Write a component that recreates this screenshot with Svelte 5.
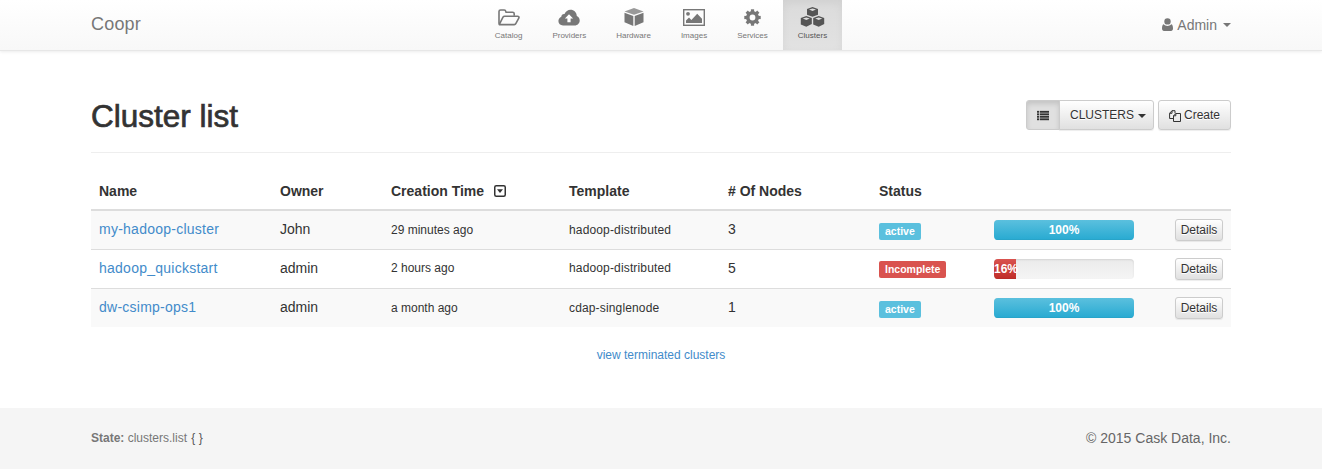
<script>
  const rows = [
    { name: 'my-hadoop-cluster', owner: 'John', time: '29 minutes ago', template: 'hadoop-distributed', nodes: 3, status: 'active', pct: 100 },
    { name: 'hadoop_quickstart', owner: 'admin', time: '2 hours ago', template: 'hadoop-distributed', nodes: 5, status: 'Incomplete', pct: 16 },
    { name: 'dw-csimp-ops1', owner: 'admin', time: 'a month ago', template: 'cdap-singlenode', nodes: 1, status: 'active', pct: 100 }
  ];
  const navItems = ['Catalog', 'Providers', 'Hardware', 'Images', 'Services', 'Clusters'];
  const teeth = [0, 45, 90, 135, 180, 225, 270, 315];
</script>

<header class="navbar">
  <div class="container bar">
    <a class="brand" href="#top">Coopr</a>
    <nav class="nav">
      {#each navItems as item}
        <a class="nav-item" class:active={item === 'Clusters'} href="#top">
          <span class="nav-icon">
            {#if item === 'Catalog'}
              <svg width="22" height="17" viewBox="0 0 22 17" fill="none" stroke="currentColor" stroke-width="1.6" stroke-linejoin="round">
                <path d="M1 14.5V2.6C1 1.7 1.7 1 2.6 1h3.6c.9 0 1.5.6 1.6 1.5l.1.7h6.7c.9 0 1.6.7 1.6 1.6v2" />
                <path d="M1.2 15.6 5 8.2c.3-.6.9-1 1.6-1h13c1 0 1.7 1 1.2 1.9l-3 5.6c-.3.6-.9.9-1.5.9H2.2c-.8 0-1.2-.4-1-1z" />
              </svg>
            {:else if item === 'Providers'}
              <svg width="22" height="17" viewBox="0 0 22 17">
                <path fill="currentColor" d="M5 16.5C2.3 16.5.4 14.600.4 12.100c0-2 1.200-3.600 2.900-4.300C3.300 5.900 4.900 4.700 6.500 5 7.600 2.400 9.900.8 12.500.8c3.500 0 6.200 2.700 6.300 6.300 1.800.7 2.900 2.400 2.900 4.400 0 2.800-2.200 5-5 5z" />
                <path fill="#fff" d="M11 5.200 6.900 9.600h2.500v3.600h3.200V9.600h2.500z" />
              </svg>
            {:else if item === 'Hardware'}
              <svg width="20" height="18" viewBox="0 0 20 18">
                <path fill="currentColor" d="M10 0 19.500 3.400 10 6.800.5 3.400z" opacity=".75" />
                <path fill="currentColor" d="M.5 4.700 9.300 7.900V18L.5 14.300zM19.500 4.700 10.700 7.900V18l8.800-3.700z" />
              </svg>
            {:else if item === 'Images'}
              <svg width="22" height="17" viewBox="0 0 22 17">
                <rect x=".7" y=".7" width="20.600" height="15.600" fill="none" stroke="currentColor" stroke-width="1.400" />
                <circle cx="5" cy="4.800" r="1.900" fill="currentColor" />
                <path fill="currentColor" d="M3 14v-2.400l3-3 2.400 2.400 5.800-6.200 4.800 5V14z" />
              </svg>
            {:else if item === 'Services'}
              <svg width="17" height="17" viewBox="0 0 17 17">
                <circle cx="8.500" cy="8.500" r="4.700" fill="none" stroke="currentColor" stroke-width="3.600" />
                {#each teeth as deg}
                  <rect x="6.900" y=".3" width="3.200" height="3.400" fill="currentColor" transform="rotate({deg} 8.500 8.500)" />
                {/each}
              </svg>
            {:else}
              <svg width="25" height="20" viewBox="0 0 25 20" fill="currentColor">
                <path d="M12.500 0 18 2v5.800L12.500 9.800 7 7.800V2zM12.500 1.400 9 2.600l3.500 1.300L16 2.600z" fill-rule="evenodd" />
                <path d="M6.300 9 11.800 11v6L6.300 19.800.8 17.500V11zM6.300 10.400 2.800 11.600l3.500 1.300 3.500-1.300z" fill-rule="evenodd" />
                <path d="M18.700 9 24.200 11v6L18.700 19.800 13.200 17.500V11zM18.700 10.400 15.200 11.600l3.500 1.300 3.500-1.300z" fill-rule="evenodd" />
              </svg>
            {/if}
          </span>
          <span class="nav-label">{item}</span>
        </a>
      {/each}
    </nav>
    <div class="user">
      <svg width="11" height="13" viewBox="0 0 11 13" fill="currentColor">
        <circle cx="5.500" cy="3.400" r="3.200" />
        <path d="M1.700 6.200C2.700 7.300 4 7.900 5.500 7.900s2.800-.6 3.800-1.700c1 .2 1.700 1.500 1.700 4.400 0 1.300-.8 2.400-2 2.400H2c-1.200 0-2-1.100-2-2.400 0-2.900.7-4.200 1.700-4.400z" />
      </svg>
      <span>Admin</span>
      <i class="caret"></i>
    </div>
  </div>
</header>

<main class="container">
  <div class="page-header">
    <h1>Cluster list</h1>
    <div class="actions">
      <div class="btn-group">
        <button class="btn btn-active" type="button" aria-label="List view">
          <svg width="13" height="11" viewBox="0 0 13 11" fill="#333">
            <rect y=".5" width="2.200" height="2" /><rect x="3" y=".5" width="10" height="2" />
            <rect y="3.200" width="2.200" height="2" /><rect x="3" y="3.200" width="10" height="2" />
            <rect y="5.900" width="2.200" height="2" /><rect x="3" y="5.900" width="10" height="2" />
            <rect y="8.600" width="2.200" height="2" /><rect x="3" y="8.600" width="10" height="2" />
          </svg>
        </button>
        <button class="btn btn-clusters" type="button">CLUSTERS <i class="caret dark"></i></button>
      </div>
      <button class="btn btn-create" type="button">
        <svg width="12" height="12" viewBox="0 0 12 12" fill="none" stroke="#333" stroke-width="1">
          <path d="M4 8.500H.6V3.300L3 .7h3v2.600" />
          <path d="M3 .7v2.600H.6" />
          <path d="M4.500 5.800 6.800 3.500h4.700v8H4.500z" />
          <path d="M6.800 3.500v2.300H4.500" />
        </svg>
        Create
      </button>
    </div>
  </div>

  <table>
    <colgroup>
      <col style="width:181px" /><col style="width:111px" /><col style="width:178px" /><col style="width:159px" />
      <col style="width:151px" /><col style="width:115px" /><col style="width:156px" /><col style="width:89px" />
    </colgroup>
    <thead>
      <tr>
        <th>Name</th>
        <th>Owner</th>
        <th>
          Creation Time
          <svg class="sort" width="12" height="12" viewBox="0 0 12 12">
            <rect x=".75" y=".75" width="10.500" height="10.500" rx="1.500" fill="none" stroke="#333" stroke-width="1.500" />
            <path d="M3 4.200h6L6 8z" fill="#333" />
          </svg>
        </th>
        <th>Template</th>
        <th># Of Nodes</th>
        <th>Status</th>
        <th></th>
        <th></th>
      </tr>
    </thead>
    <tbody>
      {#each rows as row}
        <tr>
          <td class="name"><a href="#top">{row.name}</a></td>
          <td>{row.owner}</td>
          <td class="small">{row.time}</td>
          <td class="small template">{row.template}</td>
          <td>{row.nodes}</td>
          <td class="flush"><span class="label" class:danger={row.status === 'Incomplete'}>{row.status}</span></td>
          <td class="flush">
            <div class="progress">
              <div class="progress-bar" class:danger={row.pct < 100} style="width:{row.pct}%">{row.pct}%</div>
            </div>
          </td>
          <td class="flush right"><button class="btn btn-details" type="button">Details</button></td>
        </tr>
      {/each}
    </tbody>
  </table>

  <p class="terminated"><a href="#top">view terminated clusters</a></p>
</main>

<footer class="footer">
  <div class="container foot">
    <div class="state"><strong>State:</strong> clusters.list <span class="params">{'{ }'}</span></div>
    <div class="copy">© 2015 Cask Data, Inc.</div>
  </div>
</footer>

<style>
  :global(body) {
    margin: 0;
    font-family: "Liberation Sans", Arial, sans-serif;
    font-size: 14px;
    line-height: 1.43;
    color: #333;
    background: #fff;
  }

  a {
    color: #428bca;
    text-decoration: none;
  }

  .container {
    width: 1140px;
    margin: 0 auto;
  }

  .navbar {
    box-sizing: border-box;
    height: 51px;
    background: linear-gradient(to bottom, #fff, #f8f8f8);
    border-bottom: 1px solid #e7e7e7;
    box-shadow: 0 1px 3px rgba(0, 0, 0, 0.08);
  }

  .bar {
    height: 50px;
    display: grid;
    grid-template-columns: 1fr auto 1fr;
    align-items: center;
  }

  .brand {
    font-size: 18px;
    letter-spacing: 0.2px;
    color: #777;
  }

  .nav {
    display: flex;
    height: 50px;
  }

  .nav-item {
    display: flex;
    flex-direction: column;
    align-items: center;
    padding: 0 15px;
    color: #777;
  }

  .nav-item.active {
    background: linear-gradient(to bottom, #dbdbdb, #e2e2e2);
    box-shadow: inset 0 3px 9px rgba(0, 0, 0, 0.05);
    color: #555;
  }

  .nav-icon {
    height: 20px;
    margin-top: 7px;
    display: flex;
    align-items: center;
    justify-content: center;
  }

  .nav-label {
    font-size: 8px;
    line-height: 12px;
    margin-top: 3px;
  }

  .user {
    justify-self: end;
    display: flex;
    align-items: center;
    gap: 4px;
    color: #777;
  }

  .caret {
    display: inline-block;
    width: 0;
    height: 0;
    border-top: 4px solid currentColor;
    border-left: 4px solid transparent;
    border-right: 4px solid transparent;
    margin-left: 2px;
    vertical-align: middle;
  }

  .caret.dark {
    color: #333;
    margin-left: 1px;
  }

  .page-header {
    margin-top: 49px;
    height: 52px;
    border-bottom: 1px solid #eee;
    display: flex;
    justify-content: space-between;
    align-items: flex-start;
  }

  h1 {
    margin: 0;
    font-size: 31.500px;
    font-weight: 500;
    line-height: 33px;
    -webkit-text-stroke: 0.7px #333;
  }

  .actions {
    display: flex;
    gap: 4px;
  }

  .btn-group {
    display: flex;
  }

  .btn {
    font: inherit;
    font-size: 12px;
    color: #333;
    background: linear-gradient(to bottom, #fff, #e0e0e0);
    border: 1px solid #ccc;
    border-radius: 3px;
    text-shadow: 0 1px 0 #fff;
    box-shadow: inset 0 1px 0 rgba(255, 255, 255, 0.15), 0 1px 1px rgba(0, 0, 0, 0.075);
    cursor: pointer;
  }

  .btn-group .btn,
  .btn-create {
    height: 30px;
    padding: 1px 10px 0;
    display: inline-flex;
    align-items: center;
  }

  .btn-active {
    width: 34px;
    justify-content: center;
    background: #e0e0e0;
    border-radius: 3px 0 0 3px;
    box-shadow: inset 0 3px 5px rgba(0, 0, 0, 0.125);
  }

  .btn-clusters {
    width: 95px;
    margin-left: -1px;
    gap: 3px;
    border-radius: 0 3px 3px 0;
    font-size: 12px;
  }

  .btn-create {
    gap: 3px;
  }

  table {
    margin-top: 20px;
    width: 100%;
    border-collapse: collapse;
    table-layout: fixed;
  }

  th {
    height: 36px;
    padding: 0 8px;
    text-align: left;
    font-weight: bold;
    border-bottom: 2px solid #ddd;
    white-space: nowrap;
  }

  .sort {
    margin-left: 6px;
    vertical-align: -1px;
  }

  td {
    box-sizing: border-box;
    height: 39px;
    padding: 0 8px 1px;
    border-top: 1px solid #ddd;
    white-space: nowrap;
  }

  tbody tr:first-child td {
    border-top: 0;
  }

  tbody tr:nth-child(odd) td {
    background: #f9f9f9;
  }

  .name {
    letter-spacing: 0.25px;
  }

  .small {
    padding: 1px 8px 0;
    font-size: 12px;
  }

  .template {
    letter-spacing: 0.15px;
  }

  .flush {
    padding: 0 8px;
  }

  .right {
    text-align: right;
  }

  .label {
    display: inline-block;
    padding: 2px 6px 3px;
    font-size: 10.500px;
    font-weight: bold;
    line-height: 12px;
    color: #fff;
    background: #5bc0de;
    border-radius: 2px;
    vertical-align: middle;
  }

  .label.danger {
    background: #d9534f;
  }

  .progress {
    height: 20px;
    width: 140px;
    background: linear-gradient(to bottom, #ebebeb, #f5f5f5);
    border-radius: 4px;
    box-shadow: inset 0 1px 2px rgba(0, 0, 0, 0.1);
    overflow: hidden;
  }

  .progress-bar {
    height: 20px;
    box-sizing: border-box;
    font-size: 12px;
    font-weight: bold;
    line-height: 20px;
    color: #fff;
    text-align: center;
    white-space: nowrap;
    background: linear-gradient(to bottom, #5bc0de, #2aabd2);
    border-bottom: 1px solid #28a4c9;
  }

  .progress-bar.danger {
    text-align: left;
    background: linear-gradient(to bottom, #d9534f, #c12e2a);
    border-bottom-color: #b92c28;
  }

  .btn-details {
    box-sizing: border-box;
    width: 48px;
    height: 22px;
    padding: 0;
    line-height: 18px;
    vertical-align: middle;
  }

  .terminated {
    margin: 20px 0 0;
    text-align: center;
    font-size: 12px;
    line-height: 16px;
  }

  .footer {
    margin-top: 45px;
    height: 61px;
    background: #f5f5f5;
  }

  .foot {
    height: 61px;
    display: flex;
    justify-content: space-between;
    align-items: center;
  }

  .state {
    font-size: 12px;
    color: #777;
  }

  .params {
    margin-left: 1px;
    color: #555;
  }

  .copy {
    color: #666;
  }
</style>
